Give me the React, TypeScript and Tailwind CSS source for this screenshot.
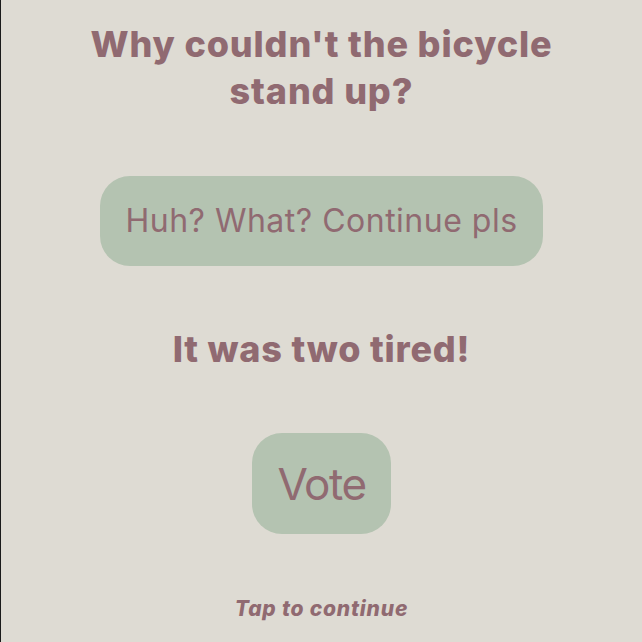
export default function App() {
  return (
    <div
      className="min-h-screen w-full bg-[#dedbd3] border-l border-[#1a1a1a] text-[#906a71] flex flex-col items-center pt-[21px]"
      style={{ fontFamily: "Inter, 'Noto Sans', sans-serif" }}
    >
      <h1 className="w-[520px] text-center text-[36px] leading-[47px] font-extrabold tracking-[0.85px]">
        Why couldn't the bicycle stand up?
      </h1>

      <button className="mt-[61px] h-[90px] px-[25px] rounded-[30px] bg-[#b4c3b1] text-[32px] leading-none font-normal tracking-[0.5px]">
        Huh? What? Continue pls
      </button>

      <p className="mt-[63px] text-[36px] leading-[41px] font-extrabold tracking-[0.8px]">
        It was two tired!
      </p>

      <button className="mt-[63px] h-[101px] px-[25px] rounded-[30px] bg-[#b4c3b1] text-[44px] leading-none font-normal tracking-[-1.5px]">
        Vote
      </button>

      <p className="mt-[61px] text-[21px] leading-[28px] font-extrabold italic tracking-[0.8px]">
        Tap to continue
      </p>
    </div>
  );
}
